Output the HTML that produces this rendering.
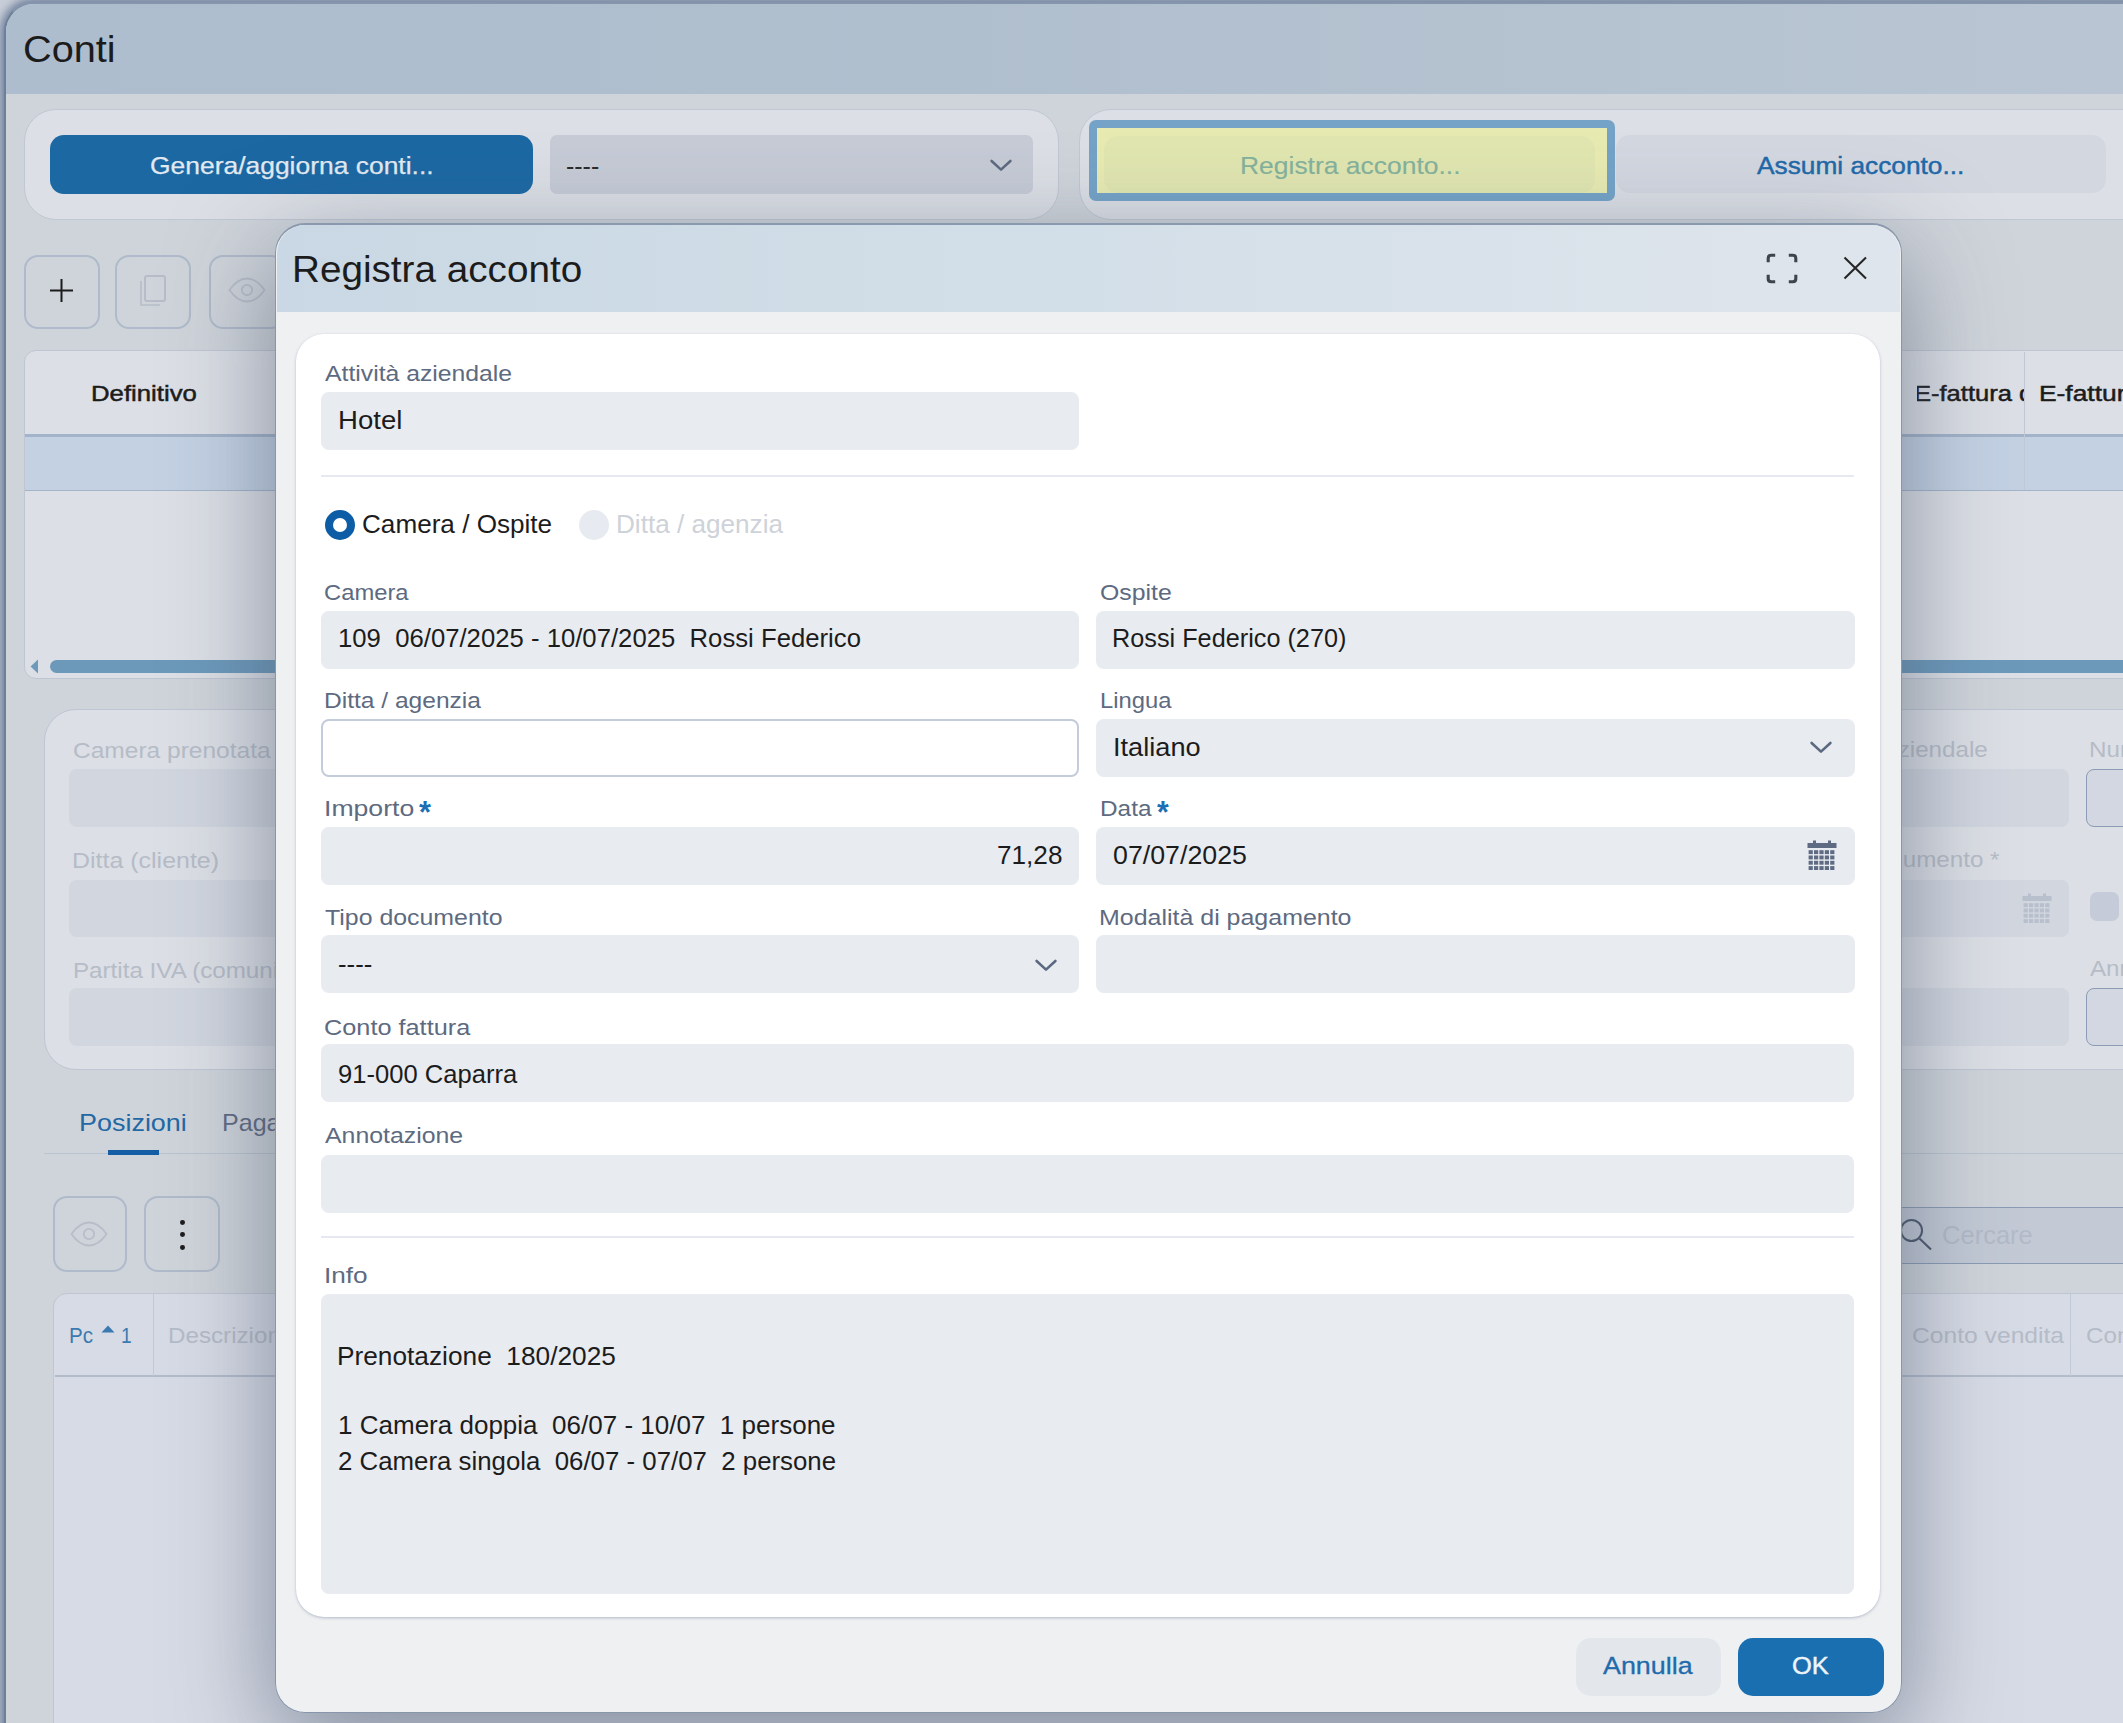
<!DOCTYPE html>
<html lang="it">
<head>
<meta charset="utf-8">
<title>Conti - Registra acconto</title>
<style>
*{box-sizing:border-box;margin:0;padding:0}
html,body{width:2123px;height:1723px;overflow:hidden}
body{position:relative;background:#c9cfd9;font-family:"Liberation Sans",sans-serif;color:#1c1c1c}
.abs{position:absolute}
.t{position:absolute;white-space:pre;line-height:1}
#win{left:4px;top:2px;width:2200px;height:1800px;background:#cfd4da;border:2px solid #6d8098;border-top:2px solid #8595ab;border-radius:30px 0 0 0;box-shadow:0 0 9px 4px rgba(84,104,138,.75);overflow:hidden}
#wtitle{left:0;top:0;width:2118px;height:89.5px;background:linear-gradient(90deg,#adbdcd 0%,#b0bfce 45%,#b9c5d2 100%)}
#dshadow{left:275.2px;top:223.5px;width:1626.8px;height:1489.5px;border-radius:30px;box-shadow:0 30px 100px 2px rgba(70,84,106,.58)}
#dlg{left:275.2px;top:222.6px;width:1626.8px;height:1490.8px;background:#eff0f2;border-radius:30px;border:1.5px solid #8796ab;border-top:2.2px solid #8a99ad}
#dtitle{left:276.7px;top:224.8px;width:1623.8px;height:87.7px;border-radius:28.5px 28.5px 0 0;background:linear-gradient(90deg,#c9d8e4 0%,#d3dfe8 50%,#dfe5ec 100%)}
#card{left:296px;top:333.5px;width:1584px;height:1283.5px;background:#fff;border-radius:28px;box-shadow:0 1px 3px rgba(120,135,160,.5)}

</style>
</head>
<body>
<div id="win" class="abs"><div id="wtitle" class="abs"></div></div>
<div class="abs" style="left:24px;top:109px;width:1035px;height:110.5px;background:#dcdfe5;border:1.5px solid #c1c7d3;border-radius:32px"></div>
<div class="abs" style="left:1079px;top:109px;width:1200px;height:110.5px;background:#dcdfe5;border:1.5px solid #c1c7d3;border-radius:32px"></div>
<div class="abs" style="left:50px;top:135.2px;width:483px;height:58.6px;background:#1c68a3;border-radius:14px"></div>
<div class="abs" style="left:550px;top:135.2px;width:483px;height:58.6px;background:#c6cbd6;border-radius:7px"></div>
<svg class="abs" style="left:988px;top:158px" width="26" height="16" viewBox="0 0 26 16"><path d="M3.6 3 L13 11.6 L22.4 3" fill="none" stroke="#5d6b81" stroke-width="2.6" stroke-linecap="round" stroke-linejoin="round"/></svg>
<div class="abs" style="left:1088.5px;top:120px;width:526px;height:80.5px;background:#e8ebb1;border:8px solid #74a3c7;border-radius:7px"></div>
<div class="abs" style="left:1104px;top:135.5px;width:491px;height:57.5px;background:#e1e6b0;border-radius:14px"></div>
<div class="abs" style="left:1615.5px;top:135.2px;width:490.5px;height:58.3px;background:#d3d7e0;border-radius:14px"></div>
<div class="abs" style="left:23.5px;top:254.5px;width:76px;height:74.5px;border:2px solid #afbaca;border-radius:14px"></div>
<div class="abs" style="left:115px;top:254.5px;width:76px;height:74.5px;border:2px solid #afbaca;border-radius:14px"></div>
<div class="abs" style="left:208.5px;top:254.5px;width:76px;height:74.5px;border:2px solid #afbaca;border-radius:14px"></div>
<svg class="abs" style="left:49px;top:278px" width="26" height="26" viewBox="0 0 26 26"><path d="M12.5 1 V24 M1 12.5 H24" stroke="#1c1c1c" stroke-width="2" fill="none"/></svg>
<svg class="abs" style="left:138px;top:273px" width="32" height="36" viewBox="0 0 32 36"><rect x="7" y="3" width="20" height="25" rx="2" fill="none" stroke="#b7bdc8" stroke-width="2"/><path d="M3 8 V32 H22" fill="none" stroke="#b7bdc8" stroke-width="1.6"/></svg>
<svg class="abs" style="left:228px;top:277px" width="38" height="26" viewBox="0 0 38 26"><path d="M1.5 13 C8 3.5 15 1.5 19 1.5 S30 3.5 36.5 13 C30 22.5 23 24.5 19 24.5 S8 22.5 1.5 13 Z" fill="none" stroke="#b8bec9" stroke-width="1.8"/><circle cx="19" cy="13" r="5.2" fill="none" stroke="#b8bec9" stroke-width="1.8"/></svg>
<div class="abs" style="left:24px;top:350.3px;width:2200px;height:328.5px;background:#dcdfe5;border:1.5px solid #bfc6d3;border-radius:12px"></div>
<div class="abs" style="left:25px;top:434px;width:2200px;height:2.5px;background:#a3b3c9"></div>
<div class="abs" style="left:25px;top:436.5px;width:2200px;height:53px;background:#c3d1e3"></div>
<div class="abs" style="left:25px;top:489.5px;width:2200px;height:1.5px;background:#a3b3c9"></div>
<div class="abs" style="left:2024px;top:352px;width:1px;height:138px;background:#c0c8d6"></div>
<svg class="abs" style="left:30px;top:659px" width="9" height="15" viewBox="0 0 9 15"><path d="M8 0.5 V14.5 L0.5 7.5 Z" fill="#6d9abb"/></svg>
<div class="abs" style="left:50px;top:660px;width:2200px;height:13px;background:#6c99ba;border-radius:7px"></div>
<div class="abs" style="left:44.3px;top:708.8px;width:2200px;height:360.8px;background:#dcdfe5;border:1.5px solid #bfc6d3;border-radius:32px"></div>
<div class="abs" style="left:69px;top:769px;width:2000px;height:57.5px;background:#d1d6df;border-radius:8px"></div>
<div class="abs" style="left:69px;top:879.5px;width:2000px;height:57.5px;background:#d1d6df;border-radius:8px"></div>
<div class="abs" style="left:69px;top:988px;width:2000px;height:57.5px;background:#d1d6df;border-radius:8px"></div>
<div class="abs" style="left:2085.5px;top:769px;width:100px;height:57.5px;background:#d3d7e1;border:1.5px solid #8c9cb5;border-radius:8px"></div>
<div class="abs" style="left:2085.5px;top:988px;width:100px;height:57.5px;background:#d3d7e1;border:1.5px solid #8c9cb5;border-radius:8px"></div>
<div class="abs" style="left:2069px;top:760px;width:16.5px;height:300px;background:#dcdfe5"></div>
<div class="abs" style="left:2090px;top:892px;width:29px;height:29px;background:#c5cbd9;border-radius:7px"></div>
<svg class="abs" style="left:2022px;top:893px;opacity:1" width="30" height="31" viewBox="0 0 30 31"><rect x="0.5" y="3" width="29" height="5" fill="#b9c0cd"/><rect x="6" y="0.5" width="3" height="4" fill="#b9c0cd"/><rect x="21" y="0.5" width="3" height="4" fill="#b9c0cd"/><rect x="1.6" y="10.2" width="4.2" height="3.9" fill="#b9c0cd"/><rect x="7.0" y="10.2" width="4.2" height="3.9" fill="#b9c0cd"/><rect x="12.4" y="10.2" width="4.2" height="3.9" fill="#b9c0cd"/><rect x="17.8" y="10.2" width="4.2" height="3.9" fill="#b9c0cd"/><rect x="23.2" y="10.2" width="4.2" height="3.9" fill="#b9c0cd"/><rect x="1.6" y="15.5" width="4.2" height="3.9" fill="#b9c0cd"/><rect x="7.0" y="15.5" width="4.2" height="3.9" fill="#b9c0cd"/><rect x="12.4" y="15.5" width="4.2" height="3.9" fill="#b9c0cd"/><rect x="17.8" y="15.5" width="4.2" height="3.9" fill="#b9c0cd"/><rect x="23.2" y="15.5" width="4.2" height="3.9" fill="#b9c0cd"/><rect x="1.6" y="20.8" width="4.2" height="3.9" fill="#b9c0cd"/><rect x="7.0" y="20.8" width="4.2" height="3.9" fill="#b9c0cd"/><rect x="12.4" y="20.8" width="4.2" height="3.9" fill="#b9c0cd"/><rect x="17.8" y="20.8" width="4.2" height="3.9" fill="#b9c0cd"/><rect x="23.2" y="20.8" width="4.2" height="3.9" fill="#b9c0cd"/><rect x="1.6" y="26.1" width="4.2" height="3.9" fill="#b9c0cd"/><rect x="7.0" y="26.1" width="4.2" height="3.9" fill="#b9c0cd"/><rect x="12.4" y="26.1" width="4.2" height="3.9" fill="#b9c0cd"/><rect x="17.8" y="26.1" width="4.2" height="3.9" fill="#b9c0cd"/><rect x="23.2" y="26.1" width="4.2" height="3.9" fill="#b9c0cd"/></svg>
<div class="abs" style="left:43.5px;top:1152.5px;width:2200px;height:1.5px;background:#b9c3d1"></div>
<div class="abs" style="left:108px;top:1149.5px;width:50.5px;height:5px;background:#155ea5"></div>
<div class="abs" style="left:52.5px;top:1196px;width:74.5px;height:76px;border:2px solid #afbaca;border-radius:14px"></div>
<div class="abs" style="left:144px;top:1196px;width:76px;height:76px;border:2px solid #afbaca;border-radius:14px"></div>
<svg class="abs" style="left:70px;top:1221px" width="38" height="26" viewBox="0 0 38 26"><path d="M1.5 13 C8 3.5 15 1.5 19 1.5 S30 3.5 36.5 13 C30 22.5 23 24.5 19 24.5 S8 22.5 1.5 13 Z" fill="none" stroke="#b8bec9" stroke-width="1.8"/><circle cx="19" cy="13" r="5.2" fill="none" stroke="#b8bec9" stroke-width="1.8"/></svg>
<div class="abs" style="left:180.1px;top:1220.0px;width:4.8px;height:4.8px;background:#1c1c1c;border-radius:50%"></div>
<div class="abs" style="left:180.1px;top:1232.3999999999999px;width:4.8px;height:4.8px;background:#1c1c1c;border-radius:50%"></div>
<div class="abs" style="left:180.1px;top:1244.8px;width:4.8px;height:4.8px;background:#1c1c1c;border-radius:50%"></div>
<div class="abs" style="left:1700px;top:1207px;width:600px;height:57px;background:#c3cad6;border:1.5px solid #8a9bb3;border-radius:8px"></div>
<svg class="abs" style="left:1898px;top:1217px" width="36" height="36" viewBox="0 0 36 36"><circle cx="13.5" cy="13.5" r="10.5" fill="none" stroke="#4c586c" stroke-width="2"/><path d="M21.5 21.5 L33 32.5" stroke="#4c586c" stroke-width="2.2"/></svg>
<div class="abs" style="left:53.3px;top:1292.6px;width:2200px;height:500px;background:#d7dbe5;border:1.5px solid #bfc6d3;border-radius:14px"></div>
<div class="abs" style="left:54.5px;top:1375px;width:2200px;height:1.8px;background:#b2bccb"></div>
<div class="abs" style="left:152.5px;top:1294px;width:1px;height:82px;background:#c3cad7"></div>
<div class="abs" style="left:2070px;top:1294px;width:1px;height:82px;background:#c3cad7"></div>
<svg class="abs" style="left:101px;top:1325px" width="14" height="8" viewBox="0 0 14 8"><path d="M0.5 7.5 L7 0.5 L13.5 7.5 Z" fill="#3b7ab0"/></svg>
<div class="t" style="left:22.72px;top:30.7px;font-size:37.5px;color:#1b1b1b;transform:scaleX(1.0585);transform-origin:0 50%;">Conti</div>
<div class="t" style="left:149.68px;top:154.3px;font-size:24.4px;color:#e2eaf2;transform:scaleX(1.0838);transform-origin:0 50%;-webkit-text-stroke:0.25px #e2eaf2;">Genera/aggiorna conti...</div>
<div class="t" style="left:565.90px;top:154.0px;font-size:25px;color:#2a2a2a;transform:scaleX(0.9968);transform-origin:0 50%;">----</div>
<div class="t" style="left:1239.83px;top:154.3px;font-size:24.4px;color:#85b29c;transform:scaleX(1.0842);transform-origin:0 50%;-webkit-text-stroke:0.15px #85b29c;">Registra acconto...</div>
<div class="t" style="left:1756.95px;top:154.3px;font-size:24.4px;color:#1f69a8;transform:scaleX(1.0773);transform-origin:0 50%;-webkit-text-stroke:0.45px #1f69a8;">Assumi acconto...</div>
<div class="t" style="left:91.19px;top:382.9px;font-size:22.6px;color:#1c1c1c;transform:scaleX(1.1389);transform-origin:0 50%;-webkit-text-stroke:0.5px #1c1c1c;">Definitivo</div>
<div class="abs" style="left:1916.5px;top:377.6px;width:107.5px;height:32.6px;overflow:hidden"><div class="t" style="left:-2.09px;top:5px;font-size:22.6px;color:#1c1c1c;transform:scaleX(1.1299);transform-origin:0 50%;-webkit-text-stroke:0.5px #1c1c1c;">E-fattura d</div></div>
<div class="t" style="left:2038.84px;top:382.6px;font-size:22.6px;color:#1c1c1c;transform:scaleX(1.1669);transform-origin:0 50%;-webkit-text-stroke:0.5px #1c1c1c;">E-fattura</div>
<div class="t" style="left:73.27px;top:739.9px;font-size:22.6px;color:#b6bcc7;transform:scaleX(1.0853);transform-origin:0 50%;">Camera prenotata</div>
<div class="t" style="left:72.45px;top:849.9px;font-size:22.6px;color:#b6bcc7;transform:scaleX(1.1048);transform-origin:0 50%;">Ditta (cliente)</div>
<div class="t" style="left:72.52px;top:959.9px;font-size:22.6px;color:#b6bcc7;transform:scaleX(1.0700);transform-origin:0 50%;">Partita IVA (comunitaria)</div>
<div class="t" style="left:1805.25px;top:739.4px;font-size:22.6px;color:#b6bcc7;transform:scaleX(1.0700);transform-origin:0 50%;">Attività aziendale</div>
<div class="t" style="left:1805.79px;top:849.2px;font-size:22.6px;color:#b6bcc7;transform:scaleX(1.0700);transform-origin:0 50%;">Data documento *</div>
<div class="t" style="left:2088.52px;top:739.4px;font-size:22.6px;color:#b6bcc7;transform:scaleX(1.0700);transform-origin:0 50%;">Numero</div>
<div class="t" style="left:2089.95px;top:957.9px;font-size:22.6px;color:#b6bcc7;transform:scaleX(1.0700);transform-origin:0 50%;">Annotazione</div>
<div class="t" style="left:78.99px;top:1111.1px;font-size:24px;color:#2268a5;transform:scaleX(1.1225);transform-origin:0 50%;">Posizioni</div>
<div class="t" style="left:221.95px;top:1111.1px;font-size:24px;color:#5e6a81;transform:scaleX(1.0435);transform-origin:0 50%;">Pagamenti</div>
<div class="t" style="left:1942.32px;top:1222.9px;font-size:25px;color:#b3bac8;transform:scaleX(1.0211);transform-origin:0 50%;">Cercare</div>
<div class="t" style="left:68.51px;top:1324.9px;font-size:22.6px;color:#3b7ab0;transform:scaleX(0.9109);transform-origin:0 50%;">Pc</div>
<div class="t" style="left:120.54px;top:1324.9px;font-size:22.6px;color:#3b7ab0;transform:scaleX(0.8500);transform-origin:0 50%;">1</div>
<div class="t" style="left:168.32px;top:1324.9px;font-size:22.6px;color:#b5bbc8;transform:scaleX(1.0700);transform-origin:0 50%;">Descrizione</div>
<div class="t" style="left:1911.57px;top:1324.6px;font-size:22.6px;color:#b5bbc8;transform:scaleX(1.0907);transform-origin:0 50%;">Conto vendita</div>
<div class="t" style="left:2086.49px;top:1324.6px;font-size:22.6px;color:#b5bbc8;transform:scaleX(1.0700);transform-origin:0 50%;">Conto</div>
<div id="dshadow" class="abs"></div><div id="dlg" class="abs"></div><div id="dtitle" class="abs"></div><div id="card" class="abs"></div>
<svg class="abs" style="left:1766px;top:253px" width="33" height="31" viewBox="0 0 33 31"><path d="M2.2 9.2 V5.2 Q2.2 2.2 5.2 2.2 H9.2 M22.8 2.2 H26.8 Q29.8 2.2 29.8 5.2 V9.2 M29.8 21.8 V25.8 Q29.8 28.8 26.8 28.8 H22.8 M9.2 28.8 H5.2 Q2.2 28.8 2.2 25.8 V21.8" fill="none" stroke="#3f444b" stroke-width="3.1"/></svg>
<svg class="abs" style="left:1843px;top:256px" width="25" height="24" viewBox="0 0 25 24"><path d="M1.5 1.5 L23 22.5 M23 1.5 L1.5 22.5" fill="none" stroke="#262626" stroke-width="2.1"/></svg>
<div class="abs" style="left:320.8px;top:391.5px;width:758.5px;height:58px;background:#e8ebf0;border-radius:8px;"></div>
<div class="abs" style="left:321px;top:475px;width:1533px;height:2px;background:#e6e9f1"></div>
<div class="abs" style="left:324.7px;top:510.3px;width:30px;height:30px;border-radius:50%;border:8px solid #0c5da5;background:#fff"></div>
<div class="abs" style="left:579px;top:510.3px;width:30px;height:30px;border-radius:50%;background:#e7eaf0"></div>
<div class="abs" style="left:320.8px;top:610.5px;width:758.5px;height:58px;background:#e8ebf0;border-radius:8px;"></div>
<div class="abs" style="left:1096px;top:610.5px;width:758.5px;height:58px;background:#e8ebf0;border-radius:8px;"></div>
<div class="abs" style="left:320.8px;top:718.5px;width:758.5px;height:58px;background:#fff;border:2px solid #c4ccdb;border-radius:8px"></div>
<div class="abs" style="left:1096px;top:718.5px;width:758.5px;height:58px;background:#e8ebf0;border-radius:8px;"></div>
<svg class="abs" style="left:1808px;top:740.3px" width="26" height="16" viewBox="0 0 26 16"><path d="M3.6 3 L13 11.6 L22.4 3" fill="none" stroke="#5b6980" stroke-width="2.6" stroke-linecap="round" stroke-linejoin="round"/></svg>
<div class="abs" style="left:320.8px;top:827px;width:758.5px;height:58px;background:#e8ebf0;border-radius:8px;"></div>
<div class="abs" style="left:1096px;top:827px;width:758.5px;height:58px;background:#e8ebf0;border-radius:8px;"></div>
<svg class="abs" style="left:1806.5px;top:840px;opacity:1" width="30" height="31" viewBox="0 0 30 31"><rect x="0.5" y="3" width="29" height="5" fill="#5e6b82"/><rect x="6" y="0.5" width="3" height="4" fill="#5e6b82"/><rect x="21" y="0.5" width="3" height="4" fill="#5e6b82"/><rect x="1.6" y="10.2" width="4.2" height="3.9" fill="#5e6b82"/><rect x="7.0" y="10.2" width="4.2" height="3.9" fill="#5e6b82"/><rect x="12.4" y="10.2" width="4.2" height="3.9" fill="#5e6b82"/><rect x="17.8" y="10.2" width="4.2" height="3.9" fill="#5e6b82"/><rect x="23.2" y="10.2" width="4.2" height="3.9" fill="#5e6b82"/><rect x="1.6" y="15.5" width="4.2" height="3.9" fill="#5e6b82"/><rect x="7.0" y="15.5" width="4.2" height="3.9" fill="#5e6b82"/><rect x="12.4" y="15.5" width="4.2" height="3.9" fill="#5e6b82"/><rect x="17.8" y="15.5" width="4.2" height="3.9" fill="#5e6b82"/><rect x="23.2" y="15.5" width="4.2" height="3.9" fill="#5e6b82"/><rect x="1.6" y="20.8" width="4.2" height="3.9" fill="#5e6b82"/><rect x="7.0" y="20.8" width="4.2" height="3.9" fill="#5e6b82"/><rect x="12.4" y="20.8" width="4.2" height="3.9" fill="#5e6b82"/><rect x="17.8" y="20.8" width="4.2" height="3.9" fill="#5e6b82"/><rect x="23.2" y="20.8" width="4.2" height="3.9" fill="#5e6b82"/><rect x="1.6" y="26.1" width="4.2" height="3.9" fill="#5e6b82"/><rect x="7.0" y="26.1" width="4.2" height="3.9" fill="#5e6b82"/><rect x="12.4" y="26.1" width="4.2" height="3.9" fill="#5e6b82"/><rect x="17.8" y="26.1" width="4.2" height="3.9" fill="#5e6b82"/><rect x="23.2" y="26.1" width="4.2" height="3.9" fill="#5e6b82"/></svg>
<div class="abs" style="left:320.8px;top:935.2px;width:758.5px;height:58.3px;background:#e8ebf0;border-radius:8px;"></div>
<div class="abs" style="left:1096px;top:935.2px;width:758.5px;height:58.3px;background:#e8ebf0;border-radius:8px;"></div>
<svg class="abs" style="left:1033.3px;top:957.5px" width="26" height="16" viewBox="0 0 26 16"><path d="M3.6 3 L13 11.6 L22.4 3" fill="none" stroke="#5b6980" stroke-width="2.6" stroke-linecap="round" stroke-linejoin="round"/></svg>
<div class="abs" style="left:320.8px;top:1044px;width:1533.5px;height:58px;background:#e8ebf0;border-radius:8px;"></div>
<div class="abs" style="left:320.8px;top:1154.5px;width:1533.5px;height:58px;background:#e8ebf0;border-radius:8px;"></div>
<div class="abs" style="left:321px;top:1235.5px;width:1533px;height:2px;background:#e6e9f1"></div>
<div class="abs" style="left:320.8px;top:1294px;width:1533.5px;height:299.5px;background:#e8ebf0;border-radius:8px;"></div>
<div class="abs" style="left:1575.8px;top:1637.5px;width:145px;height:58px;background:#e3e7eb;border-radius:15px"></div>
<div class="abs" style="left:1737.5px;top:1637.5px;width:146.5px;height:58px;background:#1a6fb0;border-radius:15px"></div>
<div class="t" style="left:291.73px;top:251.2px;font-size:37px;color:#1c1c1c;transform:scaleX(1.0450);transform-origin:0 50%;">Registra acconto</div>
<div class="t" style="left:324.95px;top:362.5px;font-size:22.6px;color:#5d6a80;transform:scaleX(1.0953);transform-origin:0 50%;">Attività aziendale</div>
<div class="t" style="left:337.74px;top:407.6px;font-size:25.3px;color:#1c1c1c;transform:scaleX(1.0903);transform-origin:0 50%;">Hotel</div>
<div class="t" style="left:361.79px;top:511.6px;font-size:25.3px;color:#1c1c1c;transform:scaleX(1.0324);transform-origin:0 50%;">Camera / Ospite</div>
<div class="t" style="left:616.26px;top:511.6px;font-size:25.3px;color:#ced2d9;transform:scaleX(1.0328);transform-origin:0 50%;">Ditta / agenzia</div>
<div class="t" style="left:324.21px;top:581.5px;font-size:22.6px;color:#5d6a80;transform:scaleX(1.0520);transform-origin:0 50%;">Camera</div>
<div class="t" style="left:1099.83px;top:581.5px;font-size:22.6px;color:#5d6a80;transform:scaleX(1.0987);transform-origin:0 50%;">Ospite</div>
<div class="t" style="left:338.05px;top:626.0px;font-size:25.3px;color:#1c1c1c;transform:scaleX(1.0160);transform-origin:0 50%;">109  06/07/2025 - 10/07/2025  Rossi Federico</div>
<div class="t" style="left:1112.13px;top:626.0px;font-size:25.3px;color:#1c1c1c;transform:scaleX(0.9984);transform-origin:0 50%;">Rossi Federico (270)</div>
<div class="t" style="left:324.49px;top:689.5px;font-size:22.6px;color:#5d6a80;transform:scaleX(1.0867);transform-origin:0 50%;">Ditta / agenzia</div>
<div class="t" style="left:1099.55px;top:690.0px;font-size:22.6px;color:#5d6a80;transform:scaleX(1.0524);transform-origin:0 50%;">Lingua</div>
<div class="t" style="left:1112.50px;top:734.6px;font-size:25.3px;color:#1c1c1c;transform:scaleX(1.0741);transform-origin:0 50%;">Italiano</div>
<div class="t" style="left:323.85px;top:798.0px;font-size:22.6px;color:#5d6a80;transform:scaleX(1.1779);transform-origin:0 50%;">Importo</div>
<div class="t" style="left:418.64px;top:795.5px;font-size:32px;color:#1a6fb5;transform:scaleX(0.9600);transform-origin:0 50%;font-weight:700;">*</div>
<div class="t" style="left:1099.50px;top:798.0px;font-size:22.6px;color:#5d6a80;transform:scaleX(1.0784);transform-origin:0 50%;">Data</div>
<div class="t" style="left:1157.24px;top:795.9px;font-size:32px;color:#1a6fb5;transform:scaleX(0.9400);transform-origin:0 50%;font-weight:700;">*</div>
<div class="t" style="left:996.67px;top:843.1px;font-size:25.3px;color:#1c1c1c;transform:scaleX(1.0341);transform-origin:0 50%;">71,28</div>
<div class="t" style="left:1113.16px;top:843.1px;font-size:25.3px;color:#1c1c1c;transform:scaleX(1.0578);transform-origin:0 50%;">07/07/2025</div>
<div class="t" style="left:325.45px;top:906.5px;font-size:22.6px;color:#5d6a80;transform:scaleX(1.1013);transform-origin:0 50%;">Tipo documento</div>
<div class="t" style="left:1099.45px;top:906.5px;font-size:22.6px;color:#5d6a80;transform:scaleX(1.1045);transform-origin:0 50%;">Modalità di pagamento</div>
<div class="t" style="left:337.87px;top:951.6px;font-size:25.3px;color:#1c1c1c;transform:scaleX(1.0167);transform-origin:0 50%;">----</div>
<div class="t" style="left:323.74px;top:1016.5px;font-size:22.6px;color:#5d6a80;transform:scaleX(1.1193);transform-origin:0 50%;">Conto fattura</div>
<div class="t" style="left:337.82px;top:1061.6px;font-size:25.3px;color:#1c1c1c;transform:scaleX(1.0110);transform-origin:0 50%;">91-000 Caparra</div>
<div class="t" style="left:324.95px;top:1125.0px;font-size:22.6px;color:#5d6a80;transform:scaleX(1.0994);transform-origin:0 50%;">Annotazione</div>
<div class="t" style="left:324.39px;top:1264.5px;font-size:22.6px;color:#5d6a80;transform:scaleX(1.1588);transform-origin:0 50%;">Info</div>
<div class="t" style="left:337.15px;top:1343.9px;font-size:25.3px;color:#1c1c1c;transform:scaleX(1.0381);transform-origin:0 50%;">Prenotazione  180/2025</div>
<div class="t" style="left:337.52px;top:1412.6px;font-size:25.3px;color:#1c1c1c;transform:scaleX(1.0285);transform-origin:0 50%;">1 Camera doppia  06/07 - 10/07  1 persone</div>
<div class="t" style="left:338.01px;top:1448.6px;font-size:25.3px;color:#1c1c1c;transform:scaleX(1.0207);transform-origin:0 50%;">2 Camera singola  06/07 - 07/07  2 persone</div>
<div class="t" style="left:1602.55px;top:1653.9px;font-size:24.5px;color:#1f6bab;transform:scaleX(1.0966);transform-origin:0 50%;-webkit-text-stroke:0.3px #1f6bab;">Annulla</div>
<div class="t" style="left:1791.80px;top:1653.9px;font-size:24.5px;color:#eef4fa;transform:scaleX(1.0388);transform-origin:0 50%;-webkit-text-stroke:0.4px #eef4fa;">OK</div>
</body>
</html>
